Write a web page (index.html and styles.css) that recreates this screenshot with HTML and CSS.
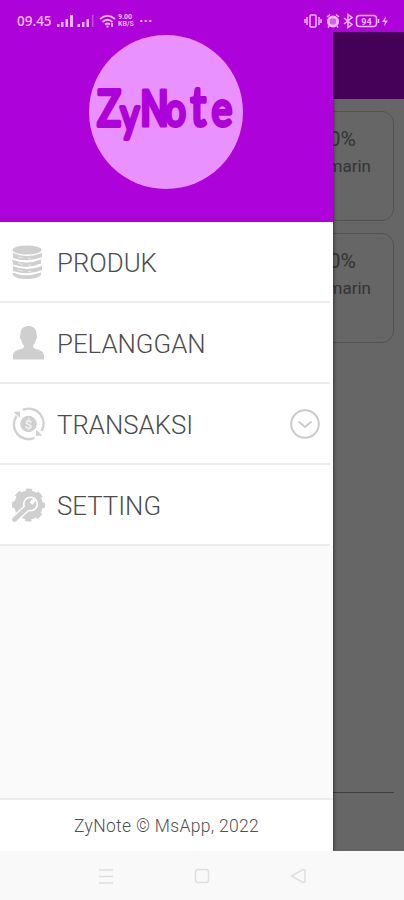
FILE: index.html
```html
<!DOCTYPE html>
<html lang="id">
<head>
<meta charset="utf-8">
<title>ZyNote</title>
<link rel="stylesheet" href="styles.css">
</head>
<body>
<div class="phone">
  <div class="page">
    <div class="appbar"></div>
    <div class="card"><div class="percent">0%</div><div class="label">Kemarin</div></div>
    <div class="card"><div class="percent">0%</div><div class="label">Kemarin</div></div>
    <div class="rule"></div>
  </div>
  <div class="scrim"></div>

  <aside class="drawer">
    <header class="brand">
      <svg class="logo" viewBox="0 0 154 154" width="154" height="154">
        <circle cx="77" cy="77" r="77" fill="#e991ff"/>
        <text class="wordmark" transform="scale(.8 1)" y="91"><tspan x="10">Z</tspan><tspan class="low" x="39" dy="5">y</tspan><tspan class="cap" x="64" dy="-5">N</tspan><tspan class="low" x="95">o</tspan><tspan class="tee" x="127">t</tspan><tspan class="ee" x="153">e</tspan></text>
      </svg>
    </header>
    <nav class="menu">
      <a class="item">
        <svg class="icon" viewBox="0 0 34 36" width="34" height="36">
          <g fill="#cfcfcf">
            <ellipse cx="16" cy="5" rx="14.500" ry="4.500"/>
            <path d="M2 8q14 6 29 0v4q-13 6-29 1zM1 14.500q14 6 29 0v4q-13 6-28 1zM2 21q14 6 29 0v4q-13 6-29 1zM1.500 27.500q14 5.500 28.500 0v2.500q-4 4-14 4T2 30.500z"/>
          </g>
          <path d="M7 12l5 1M17 13.500h3M7 18.500l5 1M17 20h3M7 25l5 1M17 26.500h3" stroke="#e9e9e9" fill="none"/>
        </svg>
        <span>PRODUK</span>
      </a>
      <a class="item">
        <svg class="icon" viewBox="0 0 34 36" width="34" height="36">
          <path fill="#cfcfcf" d="M17.500 0c5.500 0 8.500 3.500 8 9 1.200.8.600 4-.8 5-.5 3-1.800 4.500-2.700 5.500 0 2 .5 2.700 2 3.200 5 1.600 9 2.300 9 7.300v3.500H2V30c0-5 4-5.700 9-7.300 1.500-.5 2-1.200 2-3.200-1-1-2.200-2.500-2.700-5.500-1.400-1-2-4.200-.8-5-.5-5.500 2.500-9 8-9z"/>
        </svg>
        <span>PELANGGAN</span>
      </a>
      <a class="item">
        <svg class="icon" viewBox="0 0 34 36" width="34" height="36">
          <g fill="none" stroke="#d2d2d2" stroke-width="2.400">
            <path d="M12 2.800A14.800 14.800 0 0 1 30.500 24"/>
            <path d="M23.500 31A14.800 14.800 0 0 1 5.500 9"/>
          </g>
          <path fill="#d2d2d2" d="M2.500 5l6.500-.5V11zM31.500 28.500l-6.500.5v-6.500z"/>
          <circle cx="17.500" cy="17" r="8.300" fill="#d0d0d0"/>
          <text class="coin" x="17.500" y="21.500">$</text>
        </svg>
        <span>TRANSAKSI</span>
        <svg class="chevron" viewBox="0 0 32 32" width="32" height="32" fill="none" stroke="#cbcbcb" stroke-width="2">
          <circle cx="16" cy="15" r="13.800"/><path d="M9.500 12.500l6.500 5.500 6.500-5.500"/>
        </svg>
      </a>
      <a class="item">
        <svg class="icon" viewBox="0 0 34 36" width="34" height="36">
          <circle cx="17.500" cy="17" r="14.400" fill="#cfcfcf"/>
          <circle cx="17.500" cy="17" r="14.700" fill="none" stroke="#cfcfcf" stroke-width="3.600" stroke-dasharray="6.200 5.345" stroke-dashoffset="-8.500"/>
          <path stroke="#fff" stroke-width="7.500" stroke-linecap="round" d="M3.500 31.500L18 18"/>
          <circle cx="19.500" cy="16" r="7.600" fill="#fff"/>
          <path stroke="#cfcfcf" stroke-width="4.800" stroke-linecap="round" d="M3.500 31.500L18 18"/>
          <circle cx="19.500" cy="16" r="6" fill="#cfcfcf"/>
          <path stroke="#fff" stroke-width="3.600" d="M20 15.500l4.500-5"/>
        </svg>
        <span>SETTING</span>
      </a>
    </nav>
    <footer class="foot">ZyNote © MsApp, 2022</footer>
  </aside>

  <div class="status">
    <span class="clock">09.45</span>
    <svg class="signals" viewBox="0 0 40 14" width="40" height="14" fill="#efb5ff">
      <path d="M1 10h2.500v3H1zM5 8h2.500v5H5zM9.500 5H12v8H9.500zM14 1h3v12h-3zM21.500 10H24v3h-2.500zM26 8h2.500v5H26zM30.500 5H33v8h-2.500z"/><path opacity=".4" d="M36 1h1.500v12H36z"/>
    </svg>
    <svg class="wifi" viewBox="0 0 17 14" width="17" height="14" fill="none" stroke="#efb5ff" stroke-width="1.800">
      <path d="M1 5q7.500-6.500 15 0M3.500 8q5-4.500 10 0M6 10.500q2.500-2 5 0"/><path d="M7.500 12.500h2M13 9v4"/>
    </svg>
    <span class="speed">9.00<br>KB/S</span>
    <span class="dots">···</span>
    <svg class="right" viewBox="0 0 86 16" width="86" height="16" fill="none" stroke="#f1baff" stroke-width="1.500">
      <rect x="6" y="2" width="6" height="12" rx="1"/><path d="M3 4v8M1 6v4M15 4v8M17 6v4"/>
      <circle cx="29" cy="8.500" r="4.700" fill="#d560f0" stroke-width="2.800"/><path stroke-width="1.500" d="M23 4l3-2.500M32 1.500l3 2.500M25 13l-1 1.500M33 13l1 1.500"/>
      <path d="M40 5l8 6.500-4 3V1.500l4 3L40 11"/>
      <rect x="52.500" y="2.500" width="20" height="11" rx="3"/><path d="M74.500 6v4"/>
      <text class="charge" x="62.500" y="11.500">94</text>
      <path fill="#f1baff" stroke="none" d="M82 3l-4 6h3l-1 4.500 4-6h-3z"/>
    </svg>
  </div>

  <div class="navbar">
    <svg viewBox="0 0 16 16" width="16" height="16"><path d="M1 2h14M1 8.500h14M1 15h14"/></svg>
    <svg viewBox="0 0 16 16" width="16" height="16"><rect x="1.500" y="1.500" width="13" height="13" rx="2.500"/></svg>
    <svg viewBox="0 0 16 16" width="16" height="16"><path d="M1.500 8L13 1.500q2-.5 2 1.500v10q0 2-2 1.500z"/></svg>
  </div>
</div>
</body>
</html>
```
FILE: styles.css
```css
* { box-sizing: border-box; }
body { margin: 0; font-family: Roboto, sans-serif; }
.phone {
  position: relative;
  width: 404px;
  height: 900px;
  overflow: hidden;
  background: #ad02d9;
}
.page {
  display: flex;
  flex-direction: column;
  height: 851px;
  padding-top: 32px;
  background: linear-gradient(#ad02d9 32px, #fff 32px);
}
.appbar { height: 67px; margin-bottom: 12px; background: #ad02d9; }
.card {
  height: 110px;
  margin: 0 10px 12px;
  padding: 14px 22px 0 0;
  border: 1.500px solid #cfcfcf;
  border-radius: 12px;
  color: #828282;
  text-align: right;
}
.percent { padding-right: 15px; font-size: 21px; line-height: 26px; }
.label { font-size: 17px; line-height: 28px; }
.rule { height: 1px; margin: auto 10px 58px; background: #9c9c9c; }
.scrim {
  position: absolute;
  inset: 32px 0 49px 0;
  background: rgba(0, 0, 0, .6);
}
.drawer {
  position: absolute;
  top: 0;
  left: 0;
  display: flex;
  flex-direction: column;
  width: 333px;
  height: 851px;
  background: #fafafa;
  box-shadow: 1px 0 3px rgba(0, 0, 0, .45);
  clip-path: inset(32px -6px 0 0);
}
.brand {
  display: flex;
  justify-content: center;
  height: 222px;
  padding: 35px 1px 0 0;
  background: #ad02d9;
}
.wordmark {
  font: 500 50px Lato, sans-serif;
  fill: #ad02d9;
  stroke: #ad02d9;
  stroke-width: 3.800px;
  stroke-linejoin: round;
}
.low { font-size: 46px; }
.ee { font-size: 49px; }
.cap { font: 500 50px Roboto, sans-serif; letter-spacing: -8px; stroke-width: 3px; }
.tee { font-size: 54px; }
.menu { background: #fff; }
.item {
  display: flex;
  align-items: center;
  height: 81px;
  padding-left: 11px;
  background: linear-gradient(#ececec, #ececec) left bottom / 330px 2px no-repeat;
  color: #4c4c4c;
  font-size: 25.800px;
  font-weight: 300;
}
.icon { margin-right: 12px; }
.chevron { margin: 0 12px 0 auto; }
.coin {
  font: 700 13px Roboto, sans-serif;
  fill: #f0f0f0;
  text-anchor: middle;
}
.foot {
  height: 53px;
  margin-top: auto;
  border-top: 2px solid #ececec;
  background: #fff;
  color: #505050;
  font-size: 17.500px;
  font-weight: 300;
  letter-spacing: .3px;
  line-height: 53px;
  text-align: center;
}
.status {
  position: absolute;
  top: 0;
  left: 0;
  display: flex;
  align-items: center;
  width: 404px;
  height: 32px;
  padding: 9px 14px 0 17px;
  color: #f1baff;
}
.clock { width: 39px; font: 600 13.500px "Open Sans", sans-serif; }
.wifi { margin-left: 3px; }
.speed { width: 17px; margin-left: 2px; font-size: 7px; font-weight: 700; line-height: 6.500px; }
.dots { margin-left: 4px; font-size: 15px; font-weight: 700; line-height: 14px; }
.right { margin-left: auto; }
.charge { font: 700 9px Roboto, sans-serif; fill: #f1baff; stroke: none; text-anchor: middle; }
.navbar {
  display: flex;
  justify-content: center;
  align-items: center;
  gap: 80px;
  height: 49px;
  background: #f9f9f9;
}
.navbar svg { fill: none; stroke: #dedede; stroke-width: 1.500px; }
```
